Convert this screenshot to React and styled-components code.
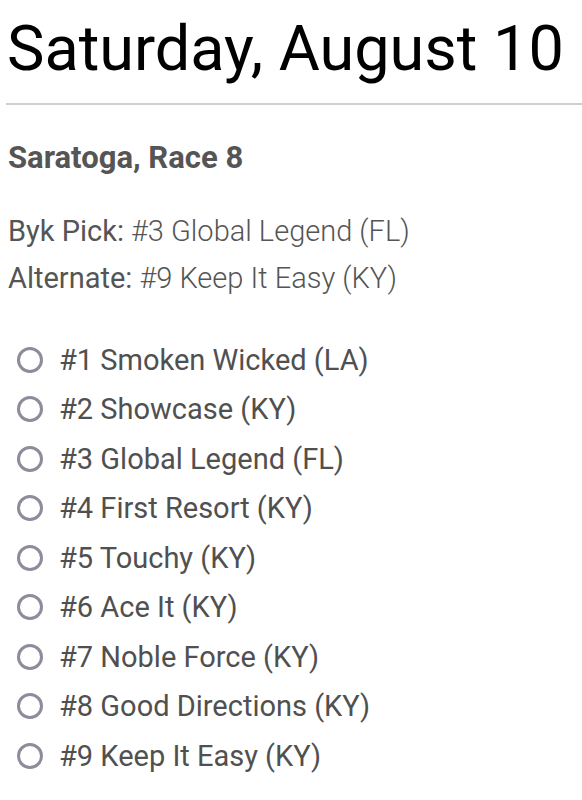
import React from 'react'
import styled, { createGlobalStyle } from 'styled-components'

const GlobalStyle = createGlobalStyle`
  body {
    margin: 0;
    background: #fff;
    font-family: Roboto, "Liberation Sans", sans-serif;
  }
`

const Page = styled.div`
  padding: 0 0 0 6px;
`

const DayTitle = styled.h1`
  margin: 0;
  padding: 12px 0 0 1px;
  font-size: 63px;
  font-weight: 400;
  line-height: 74px;
  color: #000;
`

const Divider = styled.hr`
  margin: 17px 0 0;
  border: 0;
  border-top: 2px solid #cfcfcf;
`

const Race = styled.section`
  padding: 0 0 0 2px;
  color: #555;
`

const RaceTitle = styled.h2`
  margin: 35px 0 0;
  font-size: 31px;
  font-weight: 700;
  line-height: 36px;
`

const Picks = styled.div`
  margin-top: 32px;
  font-size: 29px;
  font-weight: 300;
  line-height: 47px;
`

const Label = styled.span`
  font-weight: 400;
`

const Horses = styled.ul`
  list-style: none;
  margin: 33px 0 0;
  padding: 0;
`

const Horse = styled.li`
  display: flex;
  align-items: center;
  gap: 16px;
  height: 49.5px;
  padding-left: 9px;
  font-size: 29px;
  font-weight: 400;
  color: #505050;
`

const Radio = styled.span`
  width: 20px;
  height: 20px;
  border-radius: 50%;
  border: 3px solid #8e8c9a;
  flex-shrink: 0;
`

const horses = [
  '#1 Smoken Wicked (LA)',
  '#2 Showcase (KY)',
  '#3 Global Legend (FL)',
  '#4 First Resort (KY)',
  '#5 Touchy (KY)',
  '#6 Ace It (KY)',
  '#7 Noble Force (KY)',
  '#8 Good Directions (KY)',
  '#9 Keep It Easy (KY)',
]

const App = () => (
  <Page>
    <GlobalStyle />
    <DayTitle>Saturday, August 10</DayTitle>
    <Divider />
    <Race>
      <RaceTitle>Saratoga, Race 8</RaceTitle>
      <Picks>
        <div><Label>Byk Pick:</Label> #3 Global Legend (FL)</div>
        <div><Label>Alternate:</Label> #9 Keep It Easy (KY)</div>
      </Picks>
      <Horses>
        {horses.map(h => (
          <Horse key={h}>
            <Radio />
            {h}
          </Horse>
        ))}
      </Horses>
    </Race>
  </Page>
)

export default App
